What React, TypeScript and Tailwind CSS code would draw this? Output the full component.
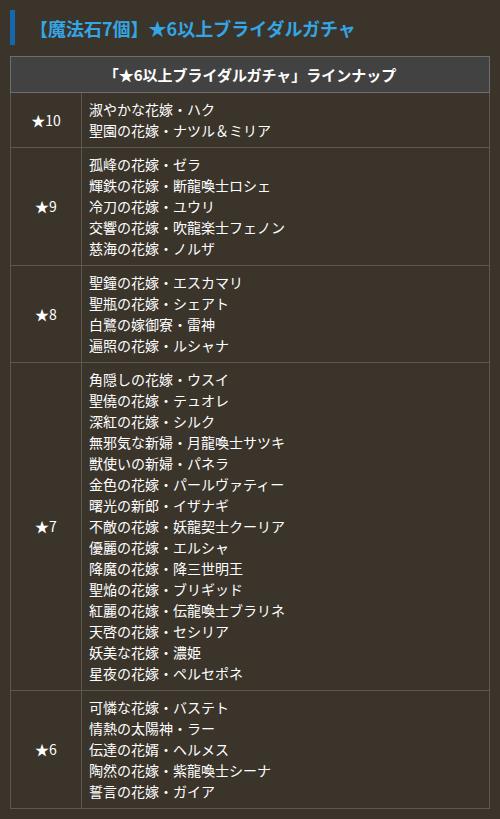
import React from "react";

type Group = { rarity: string; names: string[] };

const groups: Group[] = [
  { rarity: "★10", names: ["淑やかな花嫁・ハク", "聖園の花嫁・ナツル＆ミリア"] },
  {
    rarity: "★9",
    names: [
      "孤峰の花嫁・ゼラ",
      "輝鉄の花嫁・断龍喚士ロシェ",
      "冷刀の花嫁・ユウリ",
      "交響の花嫁・吹龍楽士フェノン",
      "慈海の花嫁・ノルザ",
    ],
  },
  {
    rarity: "★8",
    names: [
      "聖鐘の花嫁・エスカマリ",
      "聖瓶の花嫁・シェアト",
      "白鷺の嫁御寮・雷神",
      "遍照の花嫁・ルシャナ",
    ],
  },
  {
    rarity: "★7",
    names: [
      "角隠しの花嫁・ウスイ",
      "聖僥の花嫁・テュオレ",
      "深紅の花嫁・シルク",
      "無邪気な新婦・月龍喚士サツキ",
      "獣使いの新婦・パネラ",
      "金色の花嫁・パールヴァティー",
      "曙光の新郎・イザナギ",
      "不敵の花嫁・妖龍契士クーリア",
      "優麗の花嫁・エルシャ",
      "降魔の花嫁・降三世明王",
      "聖焔の花嫁・ブリギッド",
      "紅麗の花嫁・伝龍喚士ブラリネ",
      "天啓の花嫁・セシリア",
      "妖美な花嫁・濃姫",
      "星夜の花嫁・ペルセポネ",
    ],
  },
  {
    rarity: "★6",
    names: [
      "可憐な花嫁・バステト",
      "情熱の太陽神・ラー",
      "伝達の花婿・ヘルメス",
      "陶然の花嫁・紫龍喚士シーナ",
      "誓言の花嫁・ガイア",
    ],
  },
];

const font = {
  fontFamily: '"Noto Sans CJK JP", "Noto Sans", sans-serif',
};

export default function App() {
  return (
    <div
      className="w-[500px] min-h-[819px] bg-[#3a342b] pt-[10px] pb-[11px] px-[10px]"
      style={font}
    >
      {/* Title */}
      <div className="flex items-center h-[35px] border-l-[5px] border-[#1667ad] pl-[15px]">
        <h2 className="text-[18px] font-bold leading-none text-[#34a6e4]">
          【魔法石7個】★6以上ブライダルガチャ
        </h2>
      </div>

      {/* Lineup table */}
      <table className="mt-[11px] w-[480px] border-collapse text-white">
        <thead>
          <tr>
            <th
              colSpan={2}
              className="h-[36px] bg-[#424242] border border-[#6e6e6e] text-[15px] font-bold leading-[21px] text-center"
            >
              「★6以上ブライダルガチャ」ラインナップ
            </th>
          </tr>
        </thead>
        <tbody>
          {groups.map((g) => (
            <tr key={g.rarity}>
              <td className="w-[71px] border border-[#5f5850] text-center text-[14px] leading-[21px] align-middle">
                {g.rarity}
              </td>
              <td className="border border-[#5f5850] py-[6px] pl-[7px] text-[14px] leading-[21px]">
                {g.names.map((n) => (
                  <div key={n}>{n}</div>
                ))}
              </td>
            </tr>
          ))}
        </tbody>
      </table>
    </div>
  );
}
